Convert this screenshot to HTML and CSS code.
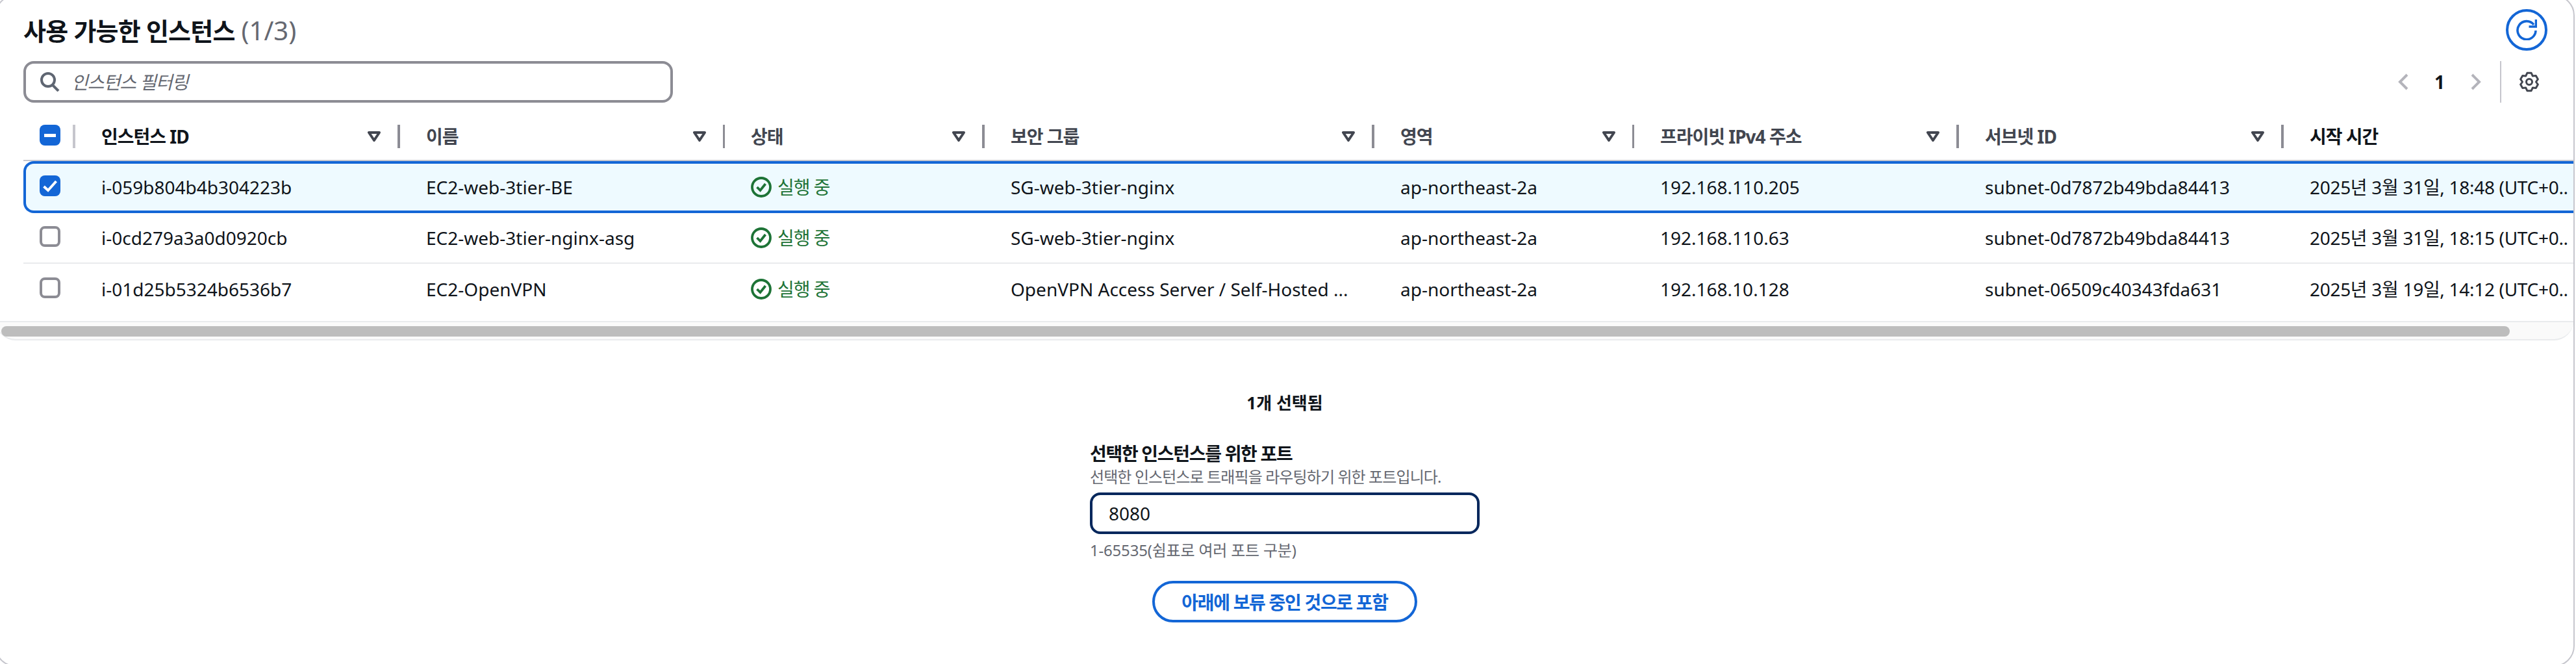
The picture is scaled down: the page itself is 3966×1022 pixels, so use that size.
FILE: index.html
```html
<!DOCTYPE html>
<html lang="ko">
<head>
    <meta charset="UTF-8">
    <title>사용 가능한 인스턴스</title>
    <link rel="stylesheet" href="styles.css">
</head>
<body>
    <div class="panel">
        <div class="panel-head">
            <h2 class="panel-title"><span class="title-main">사용 가능한 인스턴스</span> <span class="count">(1/3)</span></h2>
            <button class="refresh-btn">
                <svg viewBox="0 0 32 32" width="32" height="32" fill="none" stroke="#1366d6" stroke-width="3.6"><path d="M27 8A14 14 0 1 0 30 17"/><path d="M30.5 0v11h-11"/></svg>
            </button>
        </div>

        <div class="tools">
            <div class="filter-box">
                <svg viewBox="0 0 30 30" width="30" height="30" fill="none" stroke="#5f6672" stroke-width="4"><circle cx="12" cy="12" r="10"/><path d="M19 20l9 9"/></svg>
                <span class="filter-text">인스턴스 필터링</span>
            </div>
            <div class="pager">
                <svg viewBox="0 0 16 26" width="16" height="26" fill="none" stroke="#b4b4bb" stroke-width="4"><path d="M14 2L3 13l11 11"/></svg>
                <span class="page-no">1</span>
                <svg viewBox="0 0 16 26" width="16" height="26" fill="none" stroke="#b4b4bb" stroke-width="4"><path d="M2 2l11 11L2 24"/></svg>
                <span class="pager-sep"></span>
                <svg viewBox="1 0 30 32" width="30" height="32" fill="none" stroke="#424650" stroke-width="3" stroke-linejoin="round"><path d="M12.85 2.36h6.3l2.1 4.55 5-.46 3.14 5.46-2.89 4.09 2.89 4.09-3.14 5.46-5-.46-2.1 4.55h-6.3l-2.1-4.55-5 .46-3.14-5.46L5.5 16l-2.89-4.09 3.14-5.46 5 .46z"/><circle cx="16" cy="16" r="4.5"/></svg>
            </div>
        </div>

        <div class="table-wrap">
            <table class="inst-table">
                <colgroup>
                    <col class="c-check"><col class="c-500"><col class="c-500"><col class="c-400"><col class="c-600"><col class="c-400"><col class="c-500"><col class="c-500"><col class="c-last">
                </colgroup>
                <thead>
                    <tr>
                        <th class="check-cell"><div class="th-in"><span class="box box-on"><span class="dash"></span></span><span class="sep sep-light"></span></div></th>
                        <th class="sorted"><div class="th-in"><span class="th-text">인스턴스 ID</span><svg class="tri" viewBox="0 0 20 16" width="20" height="16"><path d="M2 2h16l-8 12z"/></svg><span class="sep"></span></div></th>
                        <th><div class="th-in"><span class="th-text">이름</span><svg class="tri" viewBox="0 0 20 16" width="20" height="16"><path d="M2 2h16l-8 12z"/></svg><span class="sep sep-thin"></span></div></th>
                        <th><div class="th-in"><span class="th-text">상태</span><svg class="tri" viewBox="0 0 20 16" width="20" height="16"><path d="M2 2h16l-8 12z"/></svg><span class="sep"></span></div></th>
                        <th><div class="th-in"><span class="th-text">보안 그룹</span><svg class="tri" viewBox="0 0 20 16" width="20" height="16"><path d="M2 2h16l-8 12z"/></svg><span class="sep"></span></div></th>
                        <th><div class="th-in"><span class="th-text">영역</span><svg class="tri" viewBox="0 0 20 16" width="20" height="16"><path d="M2 2h16l-8 12z"/></svg><span class="sep sep-thin"></span></div></th>
                        <th><div class="th-in"><span class="th-text">프라이빗 IPv4 주소</span><svg class="tri" viewBox="0 0 20 16" width="20" height="16"><path d="M2 2h16l-8 12z"/></svg><span class="sep"></span></div></th>
                        <th><div class="th-in"><span class="th-text">서브넷 ID</span><svg class="tri" viewBox="0 0 20 16" width="20" height="16"><path d="M2 2h16l-8 12z"/></svg><span class="sep"></span></div></th>
                        <th class="sorted"><div class="th-in"><span class="th-text">시작 시간</span></div></th>
                    </tr>
                </thead>
                <tbody>
                    <tr class="selected">
                        <td class="check-cell"><span class="box box-on"><svg viewBox="0 0 32 32" width="32" height="32" fill="none" stroke="#fff" stroke-width="4"><path d="M6.5 17l6.5 6L25.5 9"/></svg></span></td>
                        <td>i-059b804b4b304223b</td>
                        <td>EC2-web-3tier-BE</td>
                        <td><span class="status"><svg viewBox="0 0 32 32" width="32" height="32" fill="none" stroke="#1d7336" stroke-width="3.8"><circle cx="16" cy="16" r="14"/><path d="M9.5 16l5 5 8-10"/></svg>실행 중</span></td>
                        <td>SG-web-3tier-nginx</td>
                        <td>ap-northeast-2a</td>
                        <td>192.168.110.205</td>
                        <td>subnet-0d7872b49bda84413</td>
                        <td class="time-cell">2025년 3월 31일, 18:48 (UTC+0..</td>
                    </tr>
                    <tr>
                        <td class="check-cell"><span class="box"></span></td>
                        <td>i-0cd279a3a0d0920cb</td>
                        <td>EC2-web-3tier-nginx-asg</td>
                        <td><span class="status"><svg viewBox="0 0 32 32" width="32" height="32" fill="none" stroke="#1d7336" stroke-width="3.8"><circle cx="16" cy="16" r="14"/><path d="M9.5 16l5 5 8-10"/></svg>실행 중</span></td>
                        <td>SG-web-3tier-nginx</td>
                        <td>ap-northeast-2a</td>
                        <td>192.168.110.63</td>
                        <td>subnet-0d7872b49bda84413</td>
                        <td class="time-cell">2025년 3월 31일, 18:15 (UTC+0..</td>
                    </tr>
                    <tr class="last-row">
                        <td class="check-cell"><span class="box"></span></td>
                        <td>i-01d25b5324b6536b7</td>
                        <td>EC2-OpenVPN</td>
                        <td><span class="status"><svg viewBox="0 0 32 32" width="32" height="32" fill="none" stroke="#1d7336" stroke-width="3.8"><circle cx="16" cy="16" r="14"/><path d="M9.5 16l5 5 8-10"/></svg>실행 중</span></td>
                        <td>OpenVPN Access Server / Self-Hosted ...</td>
                        <td>ap-northeast-2a</td>
                        <td>192.168.10.128</td>
                        <td>subnet-06509c40343fda631</td>
                        <td class="time-cell">2025년 3월 19일, 14:12 (UTC+0..</td>
                    </tr>
                </tbody>
            </table>
        </div>

        <div class="scroll-track"><div class="scroll-thumb"></div></div>

        <div class="port-area">
            <div class="sel-count">1개 선택됨</div>
            <div class="port-form">
                <label class="port-label">선택한 인스턴스를 위한 포트</label>
                <div class="port-desc">선택한 인스턴스로 트래픽을 라우팅하기 위한 포트입니다.</div>
                <div class="port-input">8080</div>
                <div class="port-hint">1-65535(쉼표로 여러 포트 구분)</div>
            </div>
            <button class="add-btn">아래에 보류 중인 것으로 포함</button>
        </div>
    </div>
</body>
</html>
```
FILE: styles.css
```css
/* Global */
* {
    margin: 0;
    padding: 0;
    box-sizing: border-box;
}
body {
    font-family: "Noto Sans", "Noto Sans CJK KR", sans-serif;
    font-size: 28px;
    line-height: 36px;
    color: #0f141a;
    background-color: #fff;
    height: 1022px;
    overflow: hidden;
}

/* Panel: its top and left edges run just past the window */
.panel {
    width: 3972px;
    height: 1034px;
    margin: -8px 0 0 -8px;
    border: 2px solid #c6c6cd;
    border-radius: 32px;
    background-color: #fff;
    overflow: hidden;
}
.panel-head {
    display: flex;
    justify-content: space-between;
    align-items: center;
    height: 64px;
    margin-top: 20px;
    padding: 0 40px 0 42px;
}
.panel-title {
    font-size: 38px;
    font-weight: 700;
    line-height: 48px;
    margin-top: 2px;
}
.title-main {
    letter-spacing: -0.8px;
}
.count {
    font-size: 40px;
    font-weight: 400;
    color: #656871;
}
.refresh-btn {
    display: flex;
    align-items: center;
    justify-content: center;
    width: 64px;
    height: 64px;
    border: 4px solid #1366d6;
    border-radius: 50%;
    background: #fff;
}

/* Filter row */
.tools {
    display: flex;
    justify-content: space-between;
    align-items: center;
    height: 64px;
    margin-top: 16px;
    padding: 0 53px 0 42px;
}
.filter-box {
    display: flex;
    align-items: center;
    gap: 18px;
    width: 1000px;
    height: 64px;
    padding-left: 22px;
    border: 4px solid #8c8c94;
    border-radius: 16px;
}
.filter-text {
    font-style: italic;
    letter-spacing: -1px;
    color: #656871;
}
.pager {
    display: flex;
    align-items: center;
    height: 64px;
}
.page-no {
    width: 96px;
    text-align: center;
    font-weight: 700;
}
.pager-sep {
    width: 2px;
    height: 64px;
    margin: 0 28px 0 29px;
    background-color: #c6c6cd;
}

/* Table */
.table-wrap {
    overflow: hidden;
    margin: 34px 0 0 42px;
}
.inst-table {
    table-layout: fixed;
    width: 3936px;
    border-collapse: separate;
    border-spacing: 0;
}
.c-check { width: 80px; }
.c-500 { width: 500px; }
.c-400 { width: 400px; }
.c-600 { width: 600px; }
.c-last { width: 456px; }
th {
    height: 56px;
    font-weight: 700;
    text-align: left;
    vertical-align: top;
    letter-spacing: -1px;
    color: #424650;
    border-bottom: 2px solid #c6c6cd;
}
th.sorted {
    color: #0f141a;
}
.th-in {
    display: flex;
    align-items: center;
    height: 36px;
    padding-left: 40px;
}
.th-text {
    flex: 1;
}
.tri {
    margin-right: 26px;
    fill: none;
    stroke: #424650;
    stroke-width: 4;
    stroke-linejoin: round;
}
.sep {
    width: 4px;
    height: 36px;
    background-color: #8c8c94;
}
.sep-thin {
    width: 3px;
}
.sep-light {
    background-color: #c6c6cd;
}
th.check-cell .th-in {
    justify-content: space-between;
    padding-left: 25px;
}
th.check-cell .box {
    margin: 0 0 4px;
}
td {
    height: 78px;
    padding-left: 40px;
    white-space: nowrap;
    border-bottom: 2px solid #e9ebed;
}
td.check-cell {
    padding-left: 25px;
}
td.time-cell {
    letter-spacing: -0.3px;
}
.box {
    display: block;
    width: 32px;
    height: 32px;
    margin-bottom: 4px;
    border: 4px solid #8c8c94;
    border-radius: 8px;
}
.box-on {
    display: flex;
    align-items: center;
    justify-content: center;
    border: none;
    background-color: #1366d6;
}
.dash {
    width: 18px;
    height: 5px;
    background-color: #fff;
}
.status {
    display: flex;
    align-items: center;
    gap: 9px;
    letter-spacing: -1px;
    color: #1d7336;
}

/* Selected row */
.selected td {
    height: 80px;
    background-color: #eefaff;
    border-top: 4px solid #1366d6;
    border-bottom: 4px solid #1366d6;
}
.selected td.check-cell {
    padding-left: 21px;
    border-left: 4px solid #1366d6;
    border-top-left-radius: 16px;
    border-bottom-left-radius: 16px;
}
.last-row td {
    height: 88px;
    padding-bottom: 10px;
    border-bottom: none;
}

/* Scrollbar */
.scroll-track {
    height: 30px;
    padding: 6px 0 0 8px;
    background-color: #fafafa;
    border-top: 2px solid #e9ebed;
    border-bottom: 2px solid #e9ebed;
    border-radius: 0 0 30px 30px;
    overflow: hidden;
}
.scroll-thumb {
    width: 3862px;
    height: 16px;
    border-radius: 8px;
    background-color: #bdbdbd;
}

/* Port form */
.port-area {
    display: flex;
    flex-direction: column;
    align-items: center;
    padding-top: 78px;
}
.sel-count {
    font-size: 26px;
    font-weight: 700;
}
.port-form {
    width: 600px;
    margin-top: 42px;
}
.port-label {
    display: block;
    font-weight: 700;
    letter-spacing: -1.3px;
}
.port-desc {
    margin-top: 2px;
    font-size: 24px;
    line-height: 32px;
    letter-spacing: -0.9px;
    color: #656871;
}
.port-input {
    height: 64px;
    margin-top: 8px;
    padding-left: 25px;
    line-height: 56px;
    border: 4px solid #05275c;
    border-radius: 16px;
}
.port-hint {
    margin-top: 9px;
    font-size: 24px;
    line-height: 32px;
    letter-spacing: -0.2px;
    color: #656871;
}
.add-btn {
    height: 64px;
    margin-top: 31px;
    padding: 0 41px;
    font-family: inherit;
    font-size: 28px;
    font-weight: 700;
    letter-spacing: -1.3px;
    color: #1366d6;
    background: #fff;
    border: 4px solid #1366d6;
    border-radius: 32px;
}
```
